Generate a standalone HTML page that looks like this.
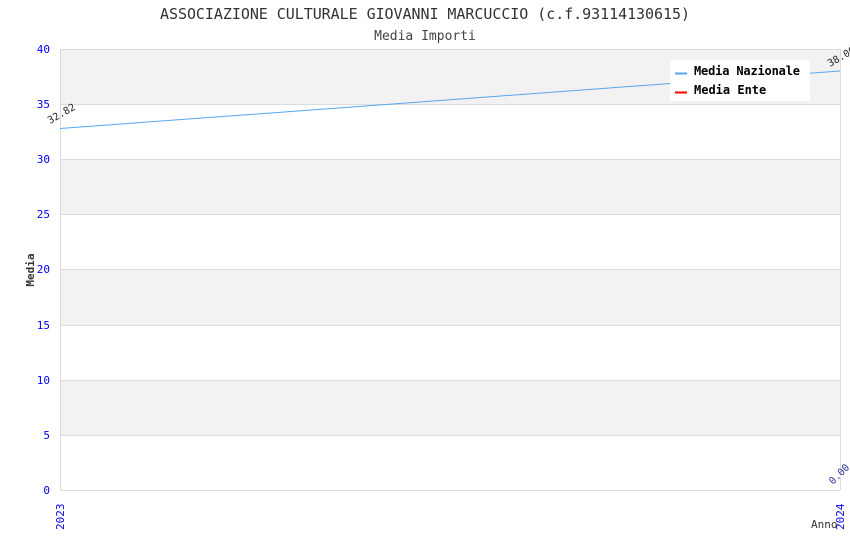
<!DOCTYPE html>
<html><head><meta charset="utf-8"><style>body{margin:0;background:#fff}svg{display:block}</style></head><body>
<svg width="850" height="550" xmlns="http://www.w3.org/2000/svg" font-family="'DejaVu Sans Mono','Liberation Mono',monospace">
<rect width="850" height="550" fill="#fff"/>
<g fill="#f2f2f2">
<rect x="60" y="49" width="780" height="55"/>
<rect x="60" y="159" width="780" height="55"/>
<rect x="60" y="269" width="780" height="56"/>
<rect x="60" y="380" width="780" height="55"/>
</g>
<g stroke="#dcdcdc" stroke-width="1">
<line x1="60" y1="49.5" x2="840" y2="49.5"/>
<line x1="60" y1="104.5" x2="840" y2="104.5"/>
<line x1="60" y1="159.5" x2="840" y2="159.5"/>
<line x1="60" y1="214.5" x2="840" y2="214.5"/>
<line x1="60" y1="269.5" x2="840" y2="269.5"/>
<line x1="60" y1="325.5" x2="840" y2="325.5"/>
<line x1="60" y1="380.5" x2="840" y2="380.5"/>
<line x1="60" y1="435.5" x2="840" y2="435.5"/>
<line x1="60" y1="490.5" x2="840" y2="490.5"/>
<line x1="60.5" y1="49" x2="60.5" y2="490"/>
<line x1="840.5" y1="49" x2="840.5" y2="490"/>
</g>
<text x="425" y="19" text-anchor="middle" font-size="15" textLength="530" fill="#333">ASSOCIAZIONE CULTURALE GIOVANNI MARCUCCIO (c.f.93114130615)</text>
<text x="425" y="40" text-anchor="middle" font-size="13" fill="#444">Media Importi</text>
<g fill="#0000ee" font-size="11" text-anchor="end">
<text x="50" y="53">40</text><text x="50" y="108">35</text><text x="50" y="163">30</text>
<text x="50" y="218">25</text><text x="50" y="273">20</text><text x="50" y="329">15</text>
<text x="50" y="384">10</text><text x="50" y="439">5</text><text x="50" y="494">0</text>
</g>
<text transform="translate(34,270) rotate(-90)" text-anchor="middle" font-size="11" font-weight="bold" fill="#333">Media</text>
<text transform="translate(64,530) rotate(-90)" font-size="11" fill="#0000ee">2023</text>
<text transform="translate(844,530) rotate(-90)" font-size="11" fill="#0000ee">2024</text>
<text x="811" y="528" font-size="11" fill="#333">Anno</text>
<line x1="60" y1="128.5" x2="840" y2="71" stroke="#5aa5f0" stroke-width="1"/>
<text transform="translate(50,124) rotate(-30)" font-size="10" fill="#222">32.82</text>
<text transform="translate(830,67) rotate(-30)" font-size="10" fill="#222">38.00</text>
<text transform="translate(833,485) rotate(-45)" font-size="10" fill="#333399">0.00</text>
<rect x="670" y="60" width="140" height="41" fill="#fff"/>
<line x1="675" y1="73.5" x2="687" y2="73.5" stroke="#5aa5f0" stroke-width="2"/>
<line x1="675" y1="92.5" x2="687" y2="92.5" stroke="#ff0000" stroke-width="2"/>
<g font-size="12" font-weight="bold" fill="#000">
<text x="694" y="75" textLength="106">Media Nazionale</text>
<text x="694" y="94">Media Ente</text>
</g>
</svg>
</body></html>
